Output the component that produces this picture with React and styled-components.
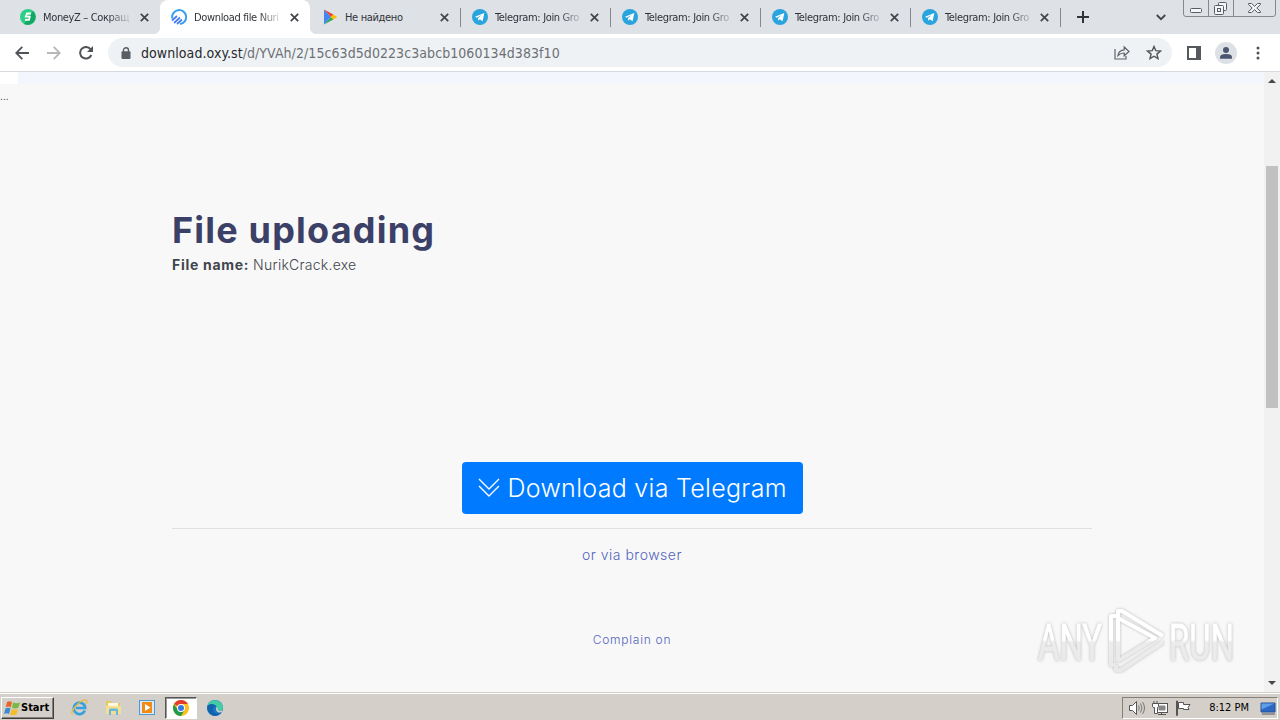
import { useId } from "react";
import styled, { createGlobalStyle, css } from "styled-components";

const tabs = [
  { title: "MoneyZ – Сокращ", icon: "money" },
  { title: "Download file Nuri", icon: "oxy", active: true },
  { title: "Не найдено", icon: "play", divider: true },
  { title: "Telegram: Join Gro", icon: "telegram", divider: true },
  { title: "Telegram: Join Gro", icon: "telegram", divider: true },
  { title: "Telegram: Join Gro", icon: "telegram", divider: true },
  { title: "Telegram: Join Gro", icon: "telegram", divider: true },
];

const Favicon = ({ name }) => {
  if (name === "money")
    return (
      <svg width="16" height="16" viewBox="0 0 16 16">
        <circle cx="8" cy="8" r="8" fill="#2bcf86" />
        <path d="M13 2a8 8 0 0 1-9 13z" fill="#16a565" />
        <path d="M11 4.5H7L5.8 7.6h4L9 10.8H5" stroke="#fff" strokeWidth="1.8" fill="none" />
      </svg>
    );
  if (name === "oxy")
    return (
      <svg width="16" height="16" viewBox="0 0 16 16" fill="none" stroke="#3b9ff0" strokeWidth="2">
        <path d="M1.3 9.5A7 7 0 1 1 9 15" />
        <path d="M1 11.5 6 7M3 14l6-5.5M6 15l5-4.5" stroke="#477bf2" strokeWidth="1.7" />
      </svg>
    );
  if (name === "play")
    return (
      <svg width="16" height="16" viewBox="0 0 16 16">
        <path d="M2 .5v15L9 8z" fill="#4285f4" />
        <path d="m2 .5 9.4 5L9 8z" fill="#ea4335" />
        <path d="m2 15.5 9.4-5L9 8z" fill="#34a853" />
        <path d="M11.2 5.4 15.3 8l-4.1 2.6L8.7 8z" fill="#fbbc04" />
      </svg>
    );
  return (
    <svg width="16" height="16" viewBox="0 0 16 16">
      <circle cx="8" cy="8" r="8" fill="#2aa4de" />
      <path d="m3 7.8 9.3-3.7-1.7 8.2-2.8-2-1.5 1.4-.4-2.5 3.8-3.3-5 2.9z" fill="#fff" />
    </svg>
  );
};

const Cross = () => (
  <svg width="9" height="9" viewBox="0 0 9 9" stroke="#41454a" strokeWidth="1.7">
    <path d="M.8.8l7.4 7.4M8.2.8L.8 8.2" />
  </svg>
);

const TabStrip = () => (
  <Strip>
    {tabs.map((tab, i) => (
      <Tab key={i} $active={tab.active} $divider={tab.divider} $icon={tab.icon}>
        <Favicon name={tab.icon} />
        <TabTitle $fade={tab.icon !== "play"}>{tab.title}</TabTitle>
        <Cross />
      </Tab>
    ))}
    <NewTab>
      <svg width="12" height="12" viewBox="0 0 12 12" stroke="#303338" strokeWidth="2">
        <path d="M6 0v12M0 6h12" />
      </svg>
    </NewTab>
    <TabSearch>
      <svg width="10" height="7" viewBox="0 0 10 7" fill="none" stroke="#41454a" strokeWidth="1.8">
        <path d="M.8 1L5 5.2 9.2 1" />
      </svg>
    </TabSearch>
    <WindowControls>
      <svg width="93" height="17" viewBox="0 0 93 17" fill="none" stroke="#85898e">
        <path d="M.5 0v14q0 2.5 2.5 2.5h87q2.500 0 2.500-2.500V0M25.500 0v16M50.500 0v16" />
        <g stroke="#585c64">
          <rect x="7.500" y="8.500" width="11" height="4" rx="1" fill="#f5f6f7" />
          <path d="M35.500 5.500v-2q0-1 1-1h6q1 0 1 1v6q0 1-1 1h-2" fill="#f5f6f7" />
          <rect x="31.500" y="5.500" width="9" height="9" rx="1" fill="#f5f6f7" />
          <rect x="34.500" y="8.500" width="3" height="3" />
          <path d="M65.500 3.500h3l3 2.800 3-2.800h3v1L73.800 8l3.700 3.500v1h-3l-3-2.800-3 2.800h-3v-1L69.200 8l-3.700-3.500z" fill="#f5f6f7" />
        </g>
      </svg>
    </WindowControls>
  </Strip>
);

const Toolbar = () => (
  <Bar>
    <NavButtons>
      <svg width="14" height="14" viewBox="0 0 14 14" fill="none" stroke="#505357" strokeWidth="1.8">
        <path d="M14 7H1.5M7.300.8L1.200 7l6.100 6.200" />
      </svg>
      <svg width="14" height="14" viewBox="0 0 14 14" fill="none" stroke="#b6b8ba" strokeWidth="1.8">
        <path d="M0 7h12.500M6.700.8L12.800 7l-6.100 6.200" />
      </svg>
      <svg width="14" height="14" viewBox="0 0 14 14" fill="none" stroke="#505357" strokeWidth="2">
        <path d="M12.300 9A5.800 5.800 0 1 1 11.500 3.200L13 4.800" />
        <path d="M14 0v6H8z" fill="#505357" stroke="none" />
      </svg>
    </NavButtons>
    <Omnibox>
      <svg width="10" height="12" viewBox="0 0 10 12">
        <path d="M2.500 5V3.200a2.500 2.500 0 0 1 5 0V5" fill="none" stroke="#5a5d61" strokeWidth="1.4" />
        <rect x=".5" y="4.300" width="9" height="7.700" rx="1" fill="#5a5d61" />
      </svg>
      <Url>
        <b>download.oxy.st</b>/d/YVAh/2/15c63d5d0223c3abcb1060134d383f10
      </Url>
      <svg width="16" height="15" viewBox="0 0 16 15" fill="none" stroke="#5f6368" strokeWidth="1.2">
        <path d="M1 4v10h11v-3" />
        <path d="M4 10.500q.8-5.500 6.200-5.700V2l4.800 4.500-4.800 4.300V8Q6.300 8 4 10.500z" />
      </svg>
      <svg width="16" height="15" viewBox="0 0 16 15" fill="none" stroke="#505357" strokeWidth="1.4">
        <path d="m8 1.500 1.800 4.200 4.600.4-3.500 3 1.100 4.500L8 11.200l-4 2.400 1.100-4.500-3.500-3 4.600-.4z" />
      </svg>
    </Omnibox>
    <Actions>
      <svg width="14" height="14" viewBox="0 0 14 14">
        <rect x="1" y="1" width="12" height="12" fill="none" stroke="#55585c" strokeWidth="2" />
        <path d="M9 1h4v12H9z" fill="#55585c" />
      </svg>
      <svg width="22" height="22" viewBox="0 0 22 22">
        <circle cx="11" cy="11" r="11" fill="#dde1e6" />
        <circle cx="11" cy="8" r="3" fill="#4b5672" />
        <path d="M5 16.800v-1.600q0-3.200 6-3.200t6 3.200v1.600z" fill="#4b5672" />
      </svg>
      <svg width="4" height="14" viewBox="0 0 4 14" fill="#505357">
        <circle cx="2" cy="2" r="1.500" />
        <circle cx="2" cy="7" r="1.500" />
        <circle cx="2" cy="12" r="1.500" />
      </svg>
    </Actions>
  </Bar>
);

const Watermark = () => {
  const id = useId();
  return (
    <Mark width="204" height="72" viewBox="0 0 204 72">
      <defs>
        <linearGradient id={id} x1="0" y1="0" x2="0" y2="72" gradientUnits="userSpaceOnUse">
          <stop offset=".5" stopColor="#ffffff" />
          <stop offset=".53" stopColor="#ececec" />
          <stop offset="1" stopColor="#e9e9e9" />
        </linearGradient>
      </defs>
      <g
        fill={`url(#${id})`}
        stroke={`url(#${id})`}
        strokeWidth=".8"
        fontFamily="Roboto, sans-serif"
        fontSize="50"
      >
        <text x="4" y="56" textLength="64" lengthAdjust="spacingAndGlyphs">ANY</text>
        <text x="135" y="56" textLength="65" lengthAdjust="spacingAndGlyphs">RUN</text>
      </g>
      <g fill="none" stroke={`url(#${id})`} strokeWidth="4" strokeLinejoin="round">
        <path d="M84 57V14l37 20-37 23" />
        <path d="M84 14V7h4l41 25M84 12h-7v49h5M82 61v5h5l42-28" />
      </g>
    </Mark>
  );
};

const Page = () => (
  <Viewport>
    <PageBody>
      <TopPanel />
      <Ellipsis>...</Ellipsis>
      <Container>
        <Title>File uploading</Title>
        <FileName>
          <b>File name:</b>
          <span>NurikCrack.exe</span>
        </FileName>
        <DownloadButton>
          <svg width="22" height="20" viewBox="0 0 22 20" fill="none" stroke="#fff" strokeWidth="1.4">
            <path d="M1 1l10 10L21 1M1 8l10 10L21 8" />
          </svg>
          <span>Download via Telegram</span>
        </DownloadButton>
        <Rule />
        <BrowserLink>or via browser</BrowserLink>
        <ComplainLink>Complain on</ComplainLink>
      </Container>
    </PageBody>
    <Scrollbar>
      <Arrow />
      <Thumb />
      <Arrow $down />
    </Scrollbar>
    <Watermark />
  </Viewport>
);

const Taskbar = () => (
  <Tasks>
    <Start>
      <svg width="16" height="16" viewBox="0 0 16 16">
        <path d="M3 2q2.500-1.500 5 0L6.800 7.300q-2.500-1.500-5 0z" fill="#e8652a" />
        <path d="M9 2.500q3 1.500 7 0l-1.700 5.300q-3.300 1.400-6.300 0z" fill="#78b843" />
        <path d="M1.500 8.500q2.500-1.500 5 0l-1.500 5.500q-2.500-1.500-5 0z" fill="#3a8ad4" />
        <path d="M7.700 9q3 1.500 6.300 0L12.500 14.500q-3.300 1.500-6.300 0z" fill="#f5bd2a" />
      </svg>
      Start
    </Start>
    <QuickLaunch>
      <Launcher>
        <svg width="17" height="17" viewBox="0 0 17 17" fill="none">
          <path d="M13.800 11.500a5.700 5.700 0 1 1 .4-2.500H5" stroke="#36a1df" strokeWidth="2.600" />
          <path d="M1.500 15.500C-2 12 12-1.500 15.500 1.500q1 1-.5 3.500" stroke="#e8bb3b" strokeWidth="1.300" />
        </svg>
      </Launcher>
      <Launcher>
        <svg width="17" height="17" viewBox="0 0 17 17">
          <path d="M1 2h5l1.500 2H15v11H1z" fill="#e5c766" />
          <path d="M3 4h10v5H3z" fill="#fff8dd" />
          <path d="M1 7h15v8H1z" fill="#f3df91" />
          <path d="M4 16v-5q0-1.500 1.500-1.500h6q1.500 0 1.500 1.500v5h-2v-4H6v4z" fill="#69b6dc" />
        </svg>
      </Launcher>
      <Launcher>
        <svg width="17" height="17" viewBox="0 0 17 17">
          <rect x=".5" y="1.500" width="15" height="14" fill="#d9ebf8" stroke="#4d9bd2" />
          <rect x="3" y="3" width="10" height="11" fill="#f28a18" />
          <path d="M6 5v7l5.500-3.500z" fill="#fff" />
        </svg>
      </Launcher>
      <Launcher $pressed>
        <svg width="16" height="16" viewBox="0 0 16 16">
          <circle cx="8" cy="8" r="8" fill="#fbc116" />
          <path d="M8 8 1.100 4A8 8 0 0 1 14.900 4H8z" fill="#e33b2e" />
          <path d="M1.100 4A8 8 0 0 0 8 16l3.500-6L8 8H3.400z" fill="#229a4c" />
          <circle cx="8" cy="8" r="4" fill="#fff" />
          <circle cx="8" cy="8" r="3" fill="#3b78e7" />
        </svg>
      </Launcher>
      <Launcher>
        <svg width="16" height="16" viewBox="0 0 16 16">
          <circle cx="8" cy="8" r="8" fill="#1976c9" />
          <path d="M.5 6C2-1.500 14-2 16 7q0 4-4 4c-3 0-2-1.500-2-3C9 4 3 4 .5 6z" fill="#43cda5" />
          <path d="M.5 6C3 3 8 3.500 9.500 6.500 6 6 5 9 7 12c2 2 5 2 7.500 0-2 4-8 5-11 2-3-2-3.500-5-3-8z" fill="#1262ad" />
          <path d="M10 7.500C9 11 12 13 15 10.800" stroke="#d4cfc8" strokeWidth="1.500" fill="none" />
        </svg>
      </Launcher>
    </QuickLaunch>
    <Tray>
      <svg width="17" height="16" viewBox="0 0 17 16" fill="none" stroke="#777">
        <path d="M1.500 5.500h3l4-4v13l-4-4h-3z" fill="#fff" stroke="#555" />
        <path d="M10.500 5.500q1.500 2.500 0 5M12.500 3.500q3 4.500 0 9M14.500 2q4 6 0 12" />
      </svg>
      <svg width="16" height="16" viewBox="0 0 16 16" fill="#fff" stroke="#555">
        <rect x="4.500" y="3.500" width="11" height="9" />
        <path d="M7 6h6v4H7z" fill="#888" stroke="#888" />
        <path d="M6 14.500h8M9.500 13v2M.5 3.500v3q0 1 2 1v6h3v-6q1 0 1-1v-3zM2 1v2.500M5 1v2.500" />
      </svg>
      <svg width="16" height="16" viewBox="0 0 16 16" fill="#fff" stroke="#555">
        <path d="M1.500 1v14.500h1V1zM3.500 2.500h5v2h6.500l-2 3 1 2H8.500v-1h-5z" />
      </svg>
      <Clock>8:12 PM</Clock>
      <svg width="16" height="14" viewBox="0 0 16 14">
        <path d="M1 2h14v9H1z" fill="#2c67c5" stroke="#255093" />
        <path d="M1.500 2.500h13l-13 6z" fill="#5f9de5" />
        <path d="M2 13h13" stroke="#555" />
      </svg>
    </Tray>
  </Tasks>
);

export default function App() {
  return (
    <Desktop>
      <GlobalStyle />
      <TabStrip />
      <Toolbar />
      <Page />
      <Taskbar />
    </Desktop>
  );
}

const GlobalStyle = createGlobalStyle`
  * {
    box-sizing: border-box;
  }

  body {
    margin: 0;
    overflow: hidden;
  }

  svg {
    display: block;
    flex-shrink: 0;
  }
`;

const Desktop = styled.div`
  display: flex;
  flex-direction: column;
  width: 1280px;
  height: 720px;
  font-family: "DejaVu Sans Condensed", "DejaVu Sans", sans-serif;
  font-size: 11px;
  color: #303338;
`;

const Strip = styled.div`
  display: flex;
  height: 34px;
  padding-left: 10px;
  background: #dee1e6;
`;

const tabInset = { money: 10, oxy: 11, play: 12, telegram: 12 };

const Tab = styled.div`
  position: relative;
  display: flex;
  align-items: center;
  width: 150px;
  padding: 0 11px 0 ${({ $icon }) => tabInset[$icon]}px;
  ${({ $active }) =>
    $active &&
    css`
      background: #fff;
      border-radius: 8px 8px 0 0;

      &::before,
      &::after {
        content: "";
        position: absolute;
        bottom: 0;
        width: 7px;
        height: 7px;
      }

      &::before {
        right: 100%;
        background: radial-gradient(circle at 0 0, transparent 7px, #fff 7.5px);
      }

      &::after {
        left: 100%;
        background: radial-gradient(circle at 100% 0, transparent 7px, #fff 7.5px);
      }
    `}
  ${({ $divider }) =>
    $divider &&
    css`
      &::after {
        content: "";
        position: absolute;
        right: -1px;
        top: 8px;
        width: 1px;
        height: 19px;
        background: #85898f;
      }
    `}
`;

const TabTitle = styled.div`
  flex: 1;
  min-width: 0;
  margin-left: 7px;
  padding-right: 4px;
  white-space: nowrap;
  letter-spacing: -0.35px;
  ${({ $fade }) =>
    $fade && "mask-image: linear-gradient(90deg, #000 64px, transparent 90px);"}
`;

const NewTab = styled.div`
  display: flex;
  align-items: center;
  padding-left: 17px;
`;

const TabSearch = styled.div`
  display: flex;
  align-items: center;
  margin-left: auto;
`;

const WindowControls = styled.div`
  margin: 0 4px 0 17px;
`;

const Bar = styled.div`
  display: flex;
  align-items: center;
  height: 38px;
  background: #fff;
  border-bottom: 1px solid #d6dade;
`;

const NavButtons = styled.div`
  display: flex;
  gap: 18px;
  padding: 0 15px;
`;

const Omnibox = styled.div`
  display: flex;
  align-items: center;
  width: 1064px;
  height: 29px;
  padding: 0 10px 0 13px;
  border-radius: 15px;
  background: #eff2f5;

  svg:last-child {
    margin-left: 16px;
  }
`;

const Url = styled.div`
  flex: 1;
  margin-left: 10px;
  font-size: 14px;
  color: #6c7074;
  letter-spacing: 0.07px;

  b {
    font-weight: 400;
    color: #26292c;
  }
`;

const Actions = styled.div`
  display: flex;
  align-items: center;
  gap: 21px;
  padding-left: 15px;

  svg:nth-child(2) {
    margin: 0 -2px 0 -7px;
  }
`;

const Viewport = styled.main`
  position: relative;
  display: flex;
  height: 620px;
  background: #f8f8f8;
`;

const PageBody = styled.div`
  width: 1264px;
  font-family: Inter, sans-serif;
`;

const TopPanel = styled.div`
  height: 12px;
  border-left: 18px solid #fff;
  background: #f4f6fd;
`;

const Ellipsis = styled.div`
  height: 22px;
  font-size: 10px;
  line-height: 25px;
  color: #444;
`;

const Container = styled.div`
  display: flex;
  flex-direction: column;
  width: 920px;
  margin: 0 auto;
  padding-top: 102px;
`;

const Title = styled.h1`
  margin: 0;
  font-size: 36px;
  line-height: 45px;
  font-weight: 700;
  letter-spacing: 1.2px;
  color: #3b4066;
`;

const FileName = styled.div`
  display: flex;
  gap: 4px;
  height: 23px;
  font-size: 14px;
  line-height: 23px;
  color: #41454d;

  b {
    letter-spacing: 0.7px;
  }

  span {
    font-weight: 300;
    letter-spacing: 0.25px;
  }
`;

const DownloadButton = styled.div`
  display: flex;
  align-items: center;
  align-self: center;
  gap: 8px;
  width: 341px;
  height: 52px;
  margin: 186px 0 14px;
  padding-left: 16px;
  border-radius: 4px;
  background: #007bff;
  color: #fff;
  font-size: 25px;
  font-weight: 300;
  letter-spacing: 0.3px;
  white-space: nowrap;
`;

const Rule = styled.div`
  height: 1px;
  background: #dfdfe1;
`;

const BrowserLink = styled.div`
  margin-top: 15px;
  font-size: 14px;
  font-weight: 300;
  line-height: 21px;
  text-align: center;
  letter-spacing: 0.5px;
  color: #5265bd;
`;

const ComplainLink = styled.div`
  margin-top: 65px;
  font-size: 12px;
  font-weight: 300;
  line-height: 20px;
  text-align: center;
  letter-spacing: 0.75px;
  color: #5265bd;
`;

const Scrollbar = styled.div`
  display: flex;
  flex-direction: column;
  align-items: center;
  width: 16px;
  padding: 7px 0;
  background: #f1f1f1;
`;

const Arrow = styled.div`
  margin-top: ${({ $down }) => ($down ? "auto" : 0)};
  border: 4px solid transparent;
  border-width: ${({ $down }) => ($down ? "4px 4px 0" : "0 4px 4px")};
  border-${({ $down }) => ($down ? "top" : "bottom")}-color: #45494d;
`;

const Thumb = styled.div`
  width: 12px;
  height: 242px;
  margin-top: 83px;
  background: #c1c1c1;
`;

const Mark = styled.svg`
  position: absolute;
  left: 1034px;
  top: 532px;
  filter: drop-shadow(0 0 1.5px rgba(0, 0, 0, 0.26));
`;

const Tasks = styled.div`
  display: flex;
  align-items: center;
  height: 28px;
  padding: 2px 2px 0 1px;
  background: #d4cfc8;
  border-top: 1px solid #d4cfc8;
  box-shadow: inset 0 1px #fff;
`;

const Start = styled.div`
  display: flex;
  align-items: center;
  gap: 1px;
  width: 53px;
  height: 22px;
  padding-left: 2px;
  border: 1px solid;
  border-color: #fff #404040 #404040 #fff;
  box-shadow: inset -1px -1px #858078;
  font-weight: 700;
  color: #000;
  letter-spacing: 0;
`;

const QuickLaunch = styled.div`
  display: flex;
  gap: 2px;
  margin-left: 9px;
`;

const Launcher = styled.div`
  display: flex;
  align-items: center;
  justify-content: center;
  width: 32px;
  height: 22px;
  ${({ $pressed }) =>
    $pressed &&
    css`
      background: #fff;
      border: 1px solid;
      border-color: #555 #fff #fff #555;
      box-shadow: inset 1px 1px #999;
    `}
`;

const Tray = styled.div`
  display: flex;
  align-items: center;
  gap: 7px;
  width: 156px;
  height: 22px;
  margin-left: auto;
  padding: 0 1px 0 5px;
  border: 1px solid;
  border-color: #858078 #fff #fff #858078;
`;

const Clock = styled.div`
  margin: 0 4px 0 auto;
  color: #000;
  letter-spacing: 0;
`;
